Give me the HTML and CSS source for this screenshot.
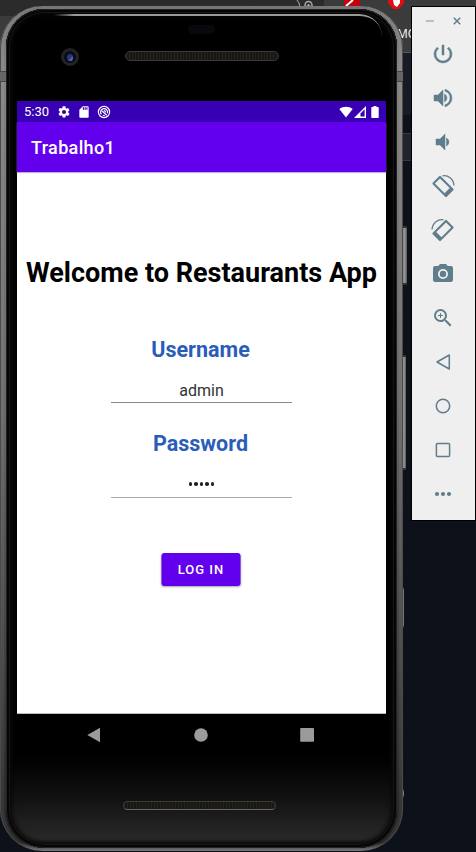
FILE: index.html
```html
<!DOCTYPE html>
<html lang="en">
<head>
<meta charset="utf-8">
<title>Trabalho1</title>
<link rel="stylesheet" href="styles.css">
</head>
<body>
<div class="desktop">
  <div class="backdrop">
    <div class="tabs"></div>
    <div class="toolbar"><span class="bookmark">MO</span></div>
    <div class="page-top"></div>
    <div class="page-gap"></div>
    <div class="page-band"></div>
  </div>
  <svg class="browser-icons" width="120" height="14" viewBox="0 0 120 14">
    <path d="M1 0l2 3 1 4" fill="none" stroke="#aaa"/>
    <path d="M9 8V5a3.500 3.500 0 0 1 7 0v3M12.500 4v4M10.500 6h4" fill="none" stroke="#aaa" stroke-width="1.5"/>
    <path d="M48 0h16v7H48z" fill="#c4000b"/><path d="M50 6l7-6" stroke="#fff" stroke-width="2"/>
    <path d="M92 0h16v3l-5 6h-6l-5-6z" fill="#e50b12"/><path d="M97 0l1 5 3 2 3-4V0z" fill="#fff"/>
  </svg>

  <div class="side-key power"></div>
  <div class="side-key volume"></div>
  <div class="side-key seam"></div>
  <div class="side-key seam low"></div>

  <div class="phone">
    <div class="body">
      <div class="glint"></div>
      <div class="sensor"></div>
      <div class="camera"><i></i></div>
      <div class="speaker top"></div>
      <div class="screen">
        <div class="status">
          <span class="time">5:30</span>
          <svg class="gear" viewBox="0 0 24 24"><path d="M19.14 12.94c.04-.3.06-.61.06-.94s-.02-.64-.07-.94l2.03-1.58a.5.5 0 0 0 .12-.61l-1.92-3.32a.49.49 0 0 0-.59-.22l-2.39.96a7 7 0 0 0-1.62-.94l-.36-2.54A.48.48 0 0 0 13.92 2h-3.84a.47.47 0 0 0-.47.41l-.36 2.54a7.4 7.4 0 0 0-1.62.94l-2.39-.96a.47.47 0 0 0-.59.22L2.74 8.87a.47.47 0 0 0 .12.61l2.03 1.58a6 6 0 0 0-.02 1.88l-2.03 1.58a.5.5 0 0 0-.12.61l1.92 3.32c.12.22.37.29.59.22l2.39-.96c.5.38 1.03.7 1.62.94l.36 2.54c.05.24.24.41.48.41h3.84c.24 0 .44-.17.47-.41l.36-2.54a7 7 0 0 0 1.62-.94l2.39.96c.22.08.47 0 .59-.22l1.92-3.32a.47.47 0 0 0-.12-.61zM12 15.6a3.6 3.6 0 1 1 0-7.2 3.6 3.6 0 0 1 0 7.2z"/></svg>
          <svg class="card" viewBox="0 0 24 24"><path d="M18 2h-8L4 8v12c0 1.1.9 2 2 2h12a2 2 0 0 0 2-2V4a2 2 0 0 0-2-2zm-6 6h-2V4h2zm3 0h-2V4h2zm3 0h-2V4h2z"/></svg>
          <svg class="debug" viewBox="0 0 14 14"><circle cx="7" cy="7" r="5.600"/><path d="M4.400 9.400a3.500 3.500 0 1 1 6-1.200M5 6l4.800 4.200M5.800 10.300a3.500 3.500 0 0 0 2 .2M6.800 5.600a1.500 1.500 0 0 1 1.600 1.800"/></svg>
          <span class="space"></span>
          <svg class="wifi" viewBox="0 0 14 12"><path d="M7 11.500L.3 3C4 0 10 0 13.700 3z"/></svg>
          <svg class="signal" viewBox="0 0 12 12"><path d="M0 12L12 0v12z"/><path class="hole" d="M6.500 7.400L10.600 3.300v7.300H6.500z"/></svg>
          <svg class="battery" viewBox="0 0 8 12"><path d="M2.500 0h3v1H7q.7 0 .7.700v9.600q0 .7-.7.700H1q-.7 0-.7-.700V1.700Q.3 1 1 1h1.500z"/></svg>
        </div>
        <div class="appbar">Trabalho1</div>
        <main class="content">
          <h1>Welcome to Restaurants App</h1>
          <label class="user-label">Username</label>
          <div class="field">admin</div>
          <label class="pass-label">Password</label>
          <div class="field secret"><i></i><i></i><i></i><i></i><i></i></div>
          <div class="login">LOG IN</div>
        </main>
      </div>
      <div class="nav">
        <svg viewBox="0 0 16 16"><path d="M1.300 8L14 .8v14.400z"/></svg>
        <svg viewBox="0 0 16 16"><circle cx="8" cy="8" r="6.800"/></svg>
        <svg viewBox="0 0 16 16"><rect x="1.200" y="1" width="13.800" height="13.800" rx=".8"/></svg>
      </div>
      <div class="speaker bottom"></div>
    </div>
  </div>

  <aside class="tools">
    <div class="window-buttons">
      <svg viewBox="0 0 8 8"><path d="M0 4h8" opacity=".55"/></svg>
      <svg viewBox="0 0 8 8"><path d="M.8.8l6.400 6.400M7.200.8L.8 7.200"/></svg>
    </div>
    <svg class="tool bold" viewBox="0 0 24 24"><path d="M13 3h-2v10h2zm4.830 2.170l-1.420 1.420A7 7 0 1 1 7.580 6.580L6.170 5.170A9 9 0 1 0 17.830 5.170z"/></svg>
    <svg class="tool bold" viewBox="0 0 24 24"><path d="M3 9v6h4l5 5V4L7 9zM13.500 7.970v8.050a4.500 4.500 0 0 0 0-8.050zM14 3.230v2.060a7 7 0 0 1 0 13.420v2.060a9 9 0 0 0 0-17.540z"/></svg>
    <svg class="tool bold" viewBox="0 0 24 24"><path d="M5 9v6h4l5 5V4L9 9zM15.500 7.970v8.050a4.500 4.500 0 0 0 0-8.050z"/></svg>
    <svg class="tool" viewBox="0 0 24 24"><g id="turn"><path fill-rule="evenodd" d="M8.200 2.200q.8-.7 1.600 0L22.300 14.700q.7.800 0 1.600l-6.500 6.500q-.8.700-1.600 0L1.700 10.300q-.7-.8 0-1.600zM9 4.400L3.900 9.500 13.600 19.200 18.700 14.100z"/><path class="line thin" d="M11.500 1.800C17 .8 22.500 5 23 11.500"/></g></svg>
    <svg class="tool" viewBox="0 0 24 24"><use href="#turn" transform="matrix(-1 0 0 1 24 0)"/></svg>
    <svg class="tool" viewBox="0 0 24 24"><path fill-rule="evenodd" d="M9 2L7.170 4H4a2 2 0 0 0-2 2v12c0 1.100.9 2 2 2h16a2 2 0 0 0 2-2V6a2 2 0 0 0-2-2h-3.170L15 2zm3 15a5 5 0 1 1 0-10 5 5 0 0 1 0 10zm0-1.800a3.200 3.200 0 1 0 0-6.400 3.200 3.200 0 0 0 0 6.400z"/></svg>
    <svg class="tool" viewBox="0 0 24 24"><path d="M15.500 14h-.79l-.28-.27A6.470 6.470 0 0 0 16 9.500 6.500 6.500 0 1 0 9.500 16c1.610 0 3.090-.59 4.230-1.570l.27.280v.79l5 4.990L20.490 19zm-6 0a4.500 4.500 0 1 1 0-9 4.500 4.500 0 0 1 0 9zM12 10h-2v2H9v-2H7V9h2V7h1v2h2z"/></svg>
    <svg class="tool" viewBox="0 0 24 24"><path class="line" d="M6 12L18.300 5v14z"/></svg>
    <svg class="tool" viewBox="0 0 24 24"><circle class="line" cx="12" cy="12" r="6.700"/></svg>
    <svg class="tool" viewBox="0 0 24 24"><rect class="line" x="5.400" y="5.400" width="13.200" height="13.200" rx="1"/></svg>
    <svg class="tool" viewBox="0 0 24 24"><circle cx="6" cy="12" r="2.100"/><circle cx="12" cy="12" r="2.100"/><circle cx="18" cy="12" r="2.100"/></svg>
  </aside>
</div>
</body>
</html>
```

FILE: styles.css
```css
* { box-sizing: border-box; }
body { margin: 0; font-family: Roboto, sans-serif; }
.desktop { position: relative; width: 476px; height: 852px; overflow: hidden; background: #0d1119; }
.backdrop { display: flex; flex-direction: column; height: 852px; }
.tabs { height: 16px; background: linear-gradient(90deg, #2b2b2b 324px, #3b3b3b 324px); }
.toolbar { height: 37px; background: #3b3b3b; border-bottom: 1px solid #5a5a5a; padding: 10px 0 0 397px; }
.bookmark { display: block; color: #fff; font: 12px/16px "Open Sans", sans-serif; }
.page-top { height: 62px; background: #171b25; }
.page-gap { height: 18px; }
.page-band { height: 28px; background: #20242d; border: solid #363a42; border-width: 1px 0; }
.browser-icons { position: absolute; left: 296px; top: 0; }

.side-key { position: absolute; left: 401px; background: linear-gradient(90deg, #555, #999 60%, #555); border: 1px solid #333; border-width: 2px 0; }
.power { top: 226px; width: 6px; height: 59px; }
.volume { top: 355px; width: 5px; height: 115px; }
.seam { top: 587px; width: 3px; height: 41px; background: #777; }
.seam.low { top: 789px; height: 9px; }

.phone {
  position: absolute; left: 0; top: 6px; width: 403px; height: 845px; padding: 3px 6px;
  border-radius: 42px;
  background: linear-gradient(#77757a 0, #858381 8%, #6a6a6a 45%, #444 75%, #2c2c2c 93%, #262626 99%, #777);
  box-shadow: inset 1px 0 0 #4b4b4b, inset -1px 0 0 #4b4b4b, inset 4px 0 0 rgba(255,255,255,.06), inset -4px 0 0 rgba(255,255,255,.06);
}
.phone::before, .phone::after { content: ""; position: absolute; top: 65px; width: 6px; height: 9px; background: #666; border: solid #444; border-width: 1px 0; }
.phone::before { left: 0; }
.phone::after { right: 0; }
.body {
  position: relative; display: flex; flex-direction: column; align-items: center;
  height: 839px; padding: 42px 11px 0; border-radius: 38px;
  background: linear-gradient(#000 89%, #111 94%, #292929 99%, #111);
  box-shadow: inset 0 0 0 1px #222, inset 0 0 0 3px #050505, inset 0 0 0 4px #161616, inset 0 0 4px 6px #080808;
}
.glint { position: absolute; left: 48px; top: 5px; width: 328px; height: 22px; border-top: 2px solid #999; border-radius: 0 34px 0 0; -webkit-mask: linear-gradient(90deg, transparent, #000 20px); mask: linear-gradient(90deg, transparent, #000 20px); }
.sensor { position: absolute; left: 182px; top: 16px; width: 27px; height: 9px; border-radius: 5px; background: #08090e; }
.camera { position: absolute; left: 55px; top: 39px; width: 18px; height: 18px; border-radius: 50%; border: 3px solid #232323; background: #090c19; display: flex; align-items: center; justify-content: center; }
.camera i { width: 6px; height: 7px; border-radius: 50%; background: linear-gradient(135deg, #26367d 50%, #8d9ee9); }
.speaker { flex: none; width: 154px; height: 10px; border-radius: 5px; border: 1px solid #3a3a38; background: repeating-linear-gradient(90deg, #26231f 0 1px, #191714 1px 3px); }
.speaker.bottom { width: 153px; height: 9px; margin-top: 45px; border-bottom-color: #666; transform: translateX(-2px); }
.screen { flex: none; width: 369px; height: 613px; margin-top: 40px; background: #fff; border-bottom: 1px solid #bbb; }
.status { display: flex; align-items: center; height: 21px; padding: 0 7px; background: #3700b3; color: #fff; }
.status svg { fill: #fff; flex: none; }
.time { width: 33px; font-size: 13px; line-height: 21px; }
.gear { width: 14px; height: 14px; }
.card { width: 14px; height: 14px; margin-left: 6px; }
.status .debug { width: 14px; height: 14px; margin-left: 6px; fill: none; stroke: #fff; stroke-width: 1.200; }
.space { flex: 1; }
.wifi { width: 14px; height: 12px; }
.signal { width: 12px; height: 12px; margin-left: 1px; }
.signal .hole { fill: #3700b3; }
.battery { width: 8px; height: 12px; margin-left: 5px; }
.appbar { height: 50px; padding: 1px 14px 0; background: #6200ee; color: #fff; font-size: 18px; letter-spacing: .350px; font-weight: 500; line-height: 50px; box-shadow: 0 1px 1px #bdb5cc; }
.content { display: flex; flex-direction: column; align-items: center; }
h1 { margin: 83px 0 0; font-size: 27px; line-height: 36px; font-weight: 700; white-space: nowrap; color: #000; }
label { color: #2a5dba; font-size: 21.500px; line-height: 28px; font-weight: 700; transform: translateX(-1px); }
.user-label { margin-top: 45px; }
.pass-label { margin-top: 26px; }
.field { width: 181px; height: 26px; margin: 13px 0 1px; border-bottom: 1px solid #888; color: #333; font-size: 16px; line-height: 27px; text-align: center; }
.secret { display: flex; justify-content: center; gap: 2px; height: 27px; margin-bottom: 0; padding-top: 11px; border-bottom-color: #aaa; }
.secret i { width: 3.600px; height: 3.600px; border-radius: 50%; background: #222; }
.login { width: 79px; height: 33px; margin-top: 55px; border-radius: 3px; background: #6200ee; color: #fff; font-size: 13px; font-weight: 500; letter-spacing: 1px; line-height: 34px; text-align: center; box-shadow: 0 1px 2px rgba(0,0,0,.35); transform: translateX(-.500px); }
.nav { display: flex; flex: none; width: 229px; height: 42px; align-items: center; justify-content: space-between; transform: translateX(-1px); }
.nav svg { width: 16px; height: 16px; fill: #9b9b9b; }

.tools { position: absolute; left: 411px; top: 6px; width: 65px; height: 515px; padding-right: 1px; border: 1px solid #000; background: #efefef; display: flex; flex-direction: column; align-items: center; gap: 20px; }
.window-buttons { display: flex; gap: 19px; width: 35px; height: 15px; padding-top: 10px; }
.window-buttons svg { flex: none; width: 8px; height: 8px; stroke: #607d8b; stroke-width: 1.500; }
.tool { flex: none; width: 24px; height: 24px; fill: #607d8b; }
.tool.bold { stroke: #607d8b; stroke-width: .500; }
.tool .line { fill: none; stroke: #607d8b; stroke-width: 1.500; stroke-linejoin: round; }
.tool .thin { stroke-width: 1.300; }
```
